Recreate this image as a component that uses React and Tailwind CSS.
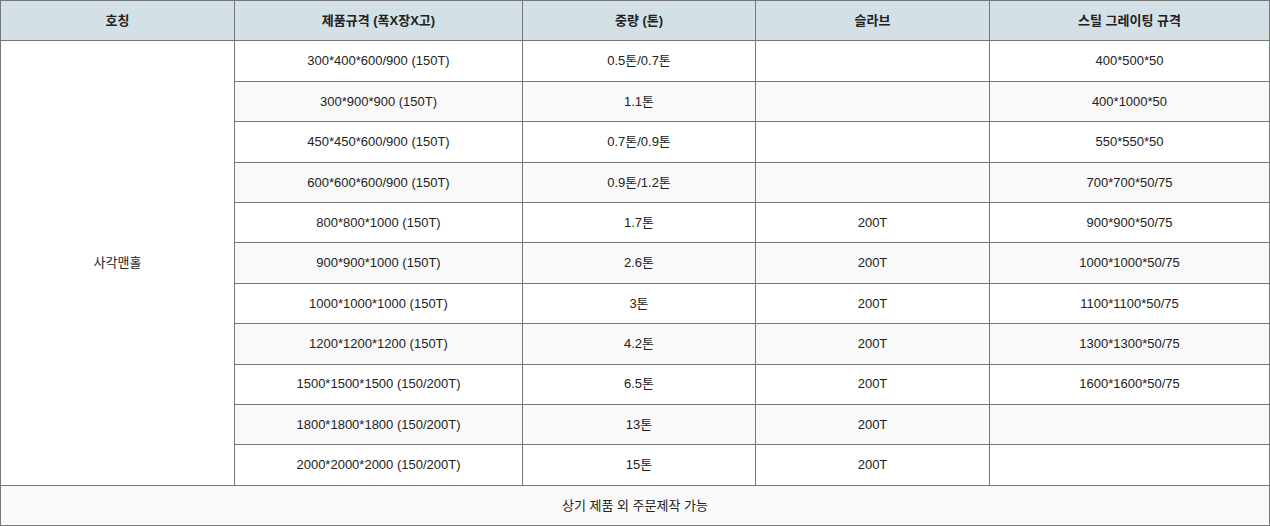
const rows = [
  ["300*400*600/900 (150T)", "0.5톤/0.7톤", "", "400*500*50"],
  ["300*900*900 (150T)", "1.1톤", "", "400*1000*50"],
  ["450*450*600/900 (150T)", "0.7톤/0.9톤", "", "550*550*50"],
  ["600*600*600/900 (150T)", "0.9톤/1.2톤", "", "700*700*50/75"],
  ["800*800*1000 (150T)", "1.7톤", "200T", "900*900*50/75"],
  ["900*900*1000 (150T)", "2.6톤", "200T", "1000*1000*50/75"],
  ["1000*1000*1000 (150T)", "3톤", "200T", "1100*1100*50/75"],
  ["1200*1200*1200 (150T)", "4.2톤", "200T", "1300*1300*50/75"],
  ["1500*1500*1500 (150/200T)", "6.5톤", "200T", "1600*1600*50/75"],
  ["1800*1800*1800 (150/200T)", "13톤", "200T", ""],
  ["2000*2000*2000 (150/200T)", "15톤", "200T", ""],
];

const cell = "border border-[#777] text-center align-middle px-2 h-[40.4px]";

export default function App() {
  return (
    <div
      className="w-[1270px] h-[526px] bg-white text-[13px] text-[#222]"
      style={{ fontFamily: '"Liberation Sans", Arial, "Noto Sans CJK KR", sans-serif' }}
    >
      <table className="w-full border-collapse table-fixed">
        <colgroup>
          <col className="w-[234px]" />
          <col className="w-[288px]" />
          <col className="w-[233px]" />
          <col className="w-[234px]" />
          <col />
        </colgroup>
        <thead>
          <tr className="bg-[#d3e0e6]">
            <th className={cell + " font-bold"}>호칭</th>
            <th className={cell + " font-bold"}>제품규격 (폭X장X고)</th>
            <th className={cell + " font-bold"}>중량 (톤)</th>
            <th className={cell + " font-bold"}>슬라브</th>
            <th className={cell + " font-bold"}>스틸 그레이팅 규격</th>
          </tr>
        </thead>
        <tbody>
          {rows.map((r, i) => (
            <tr key={i} className={i % 2 === 1 ? "bg-[#f9f9f9]" : "bg-white"}>
              {i === 0 && (
                <td rowSpan={11} className={cell + " bg-white"}>
                  사각맨홀
                </td>
              )}
              {r.map((v, j) => (
                <td key={j} className={cell}>
                  {v}
                </td>
              ))}
            </tr>
          ))}
          <tr className="bg-[#f9f9f9]">
            <td colSpan={5} className={cell}>
              상기 제품 외 주문제작 가능
            </td>
          </tr>
        </tbody>
      </table>
    </div>
  );
}
